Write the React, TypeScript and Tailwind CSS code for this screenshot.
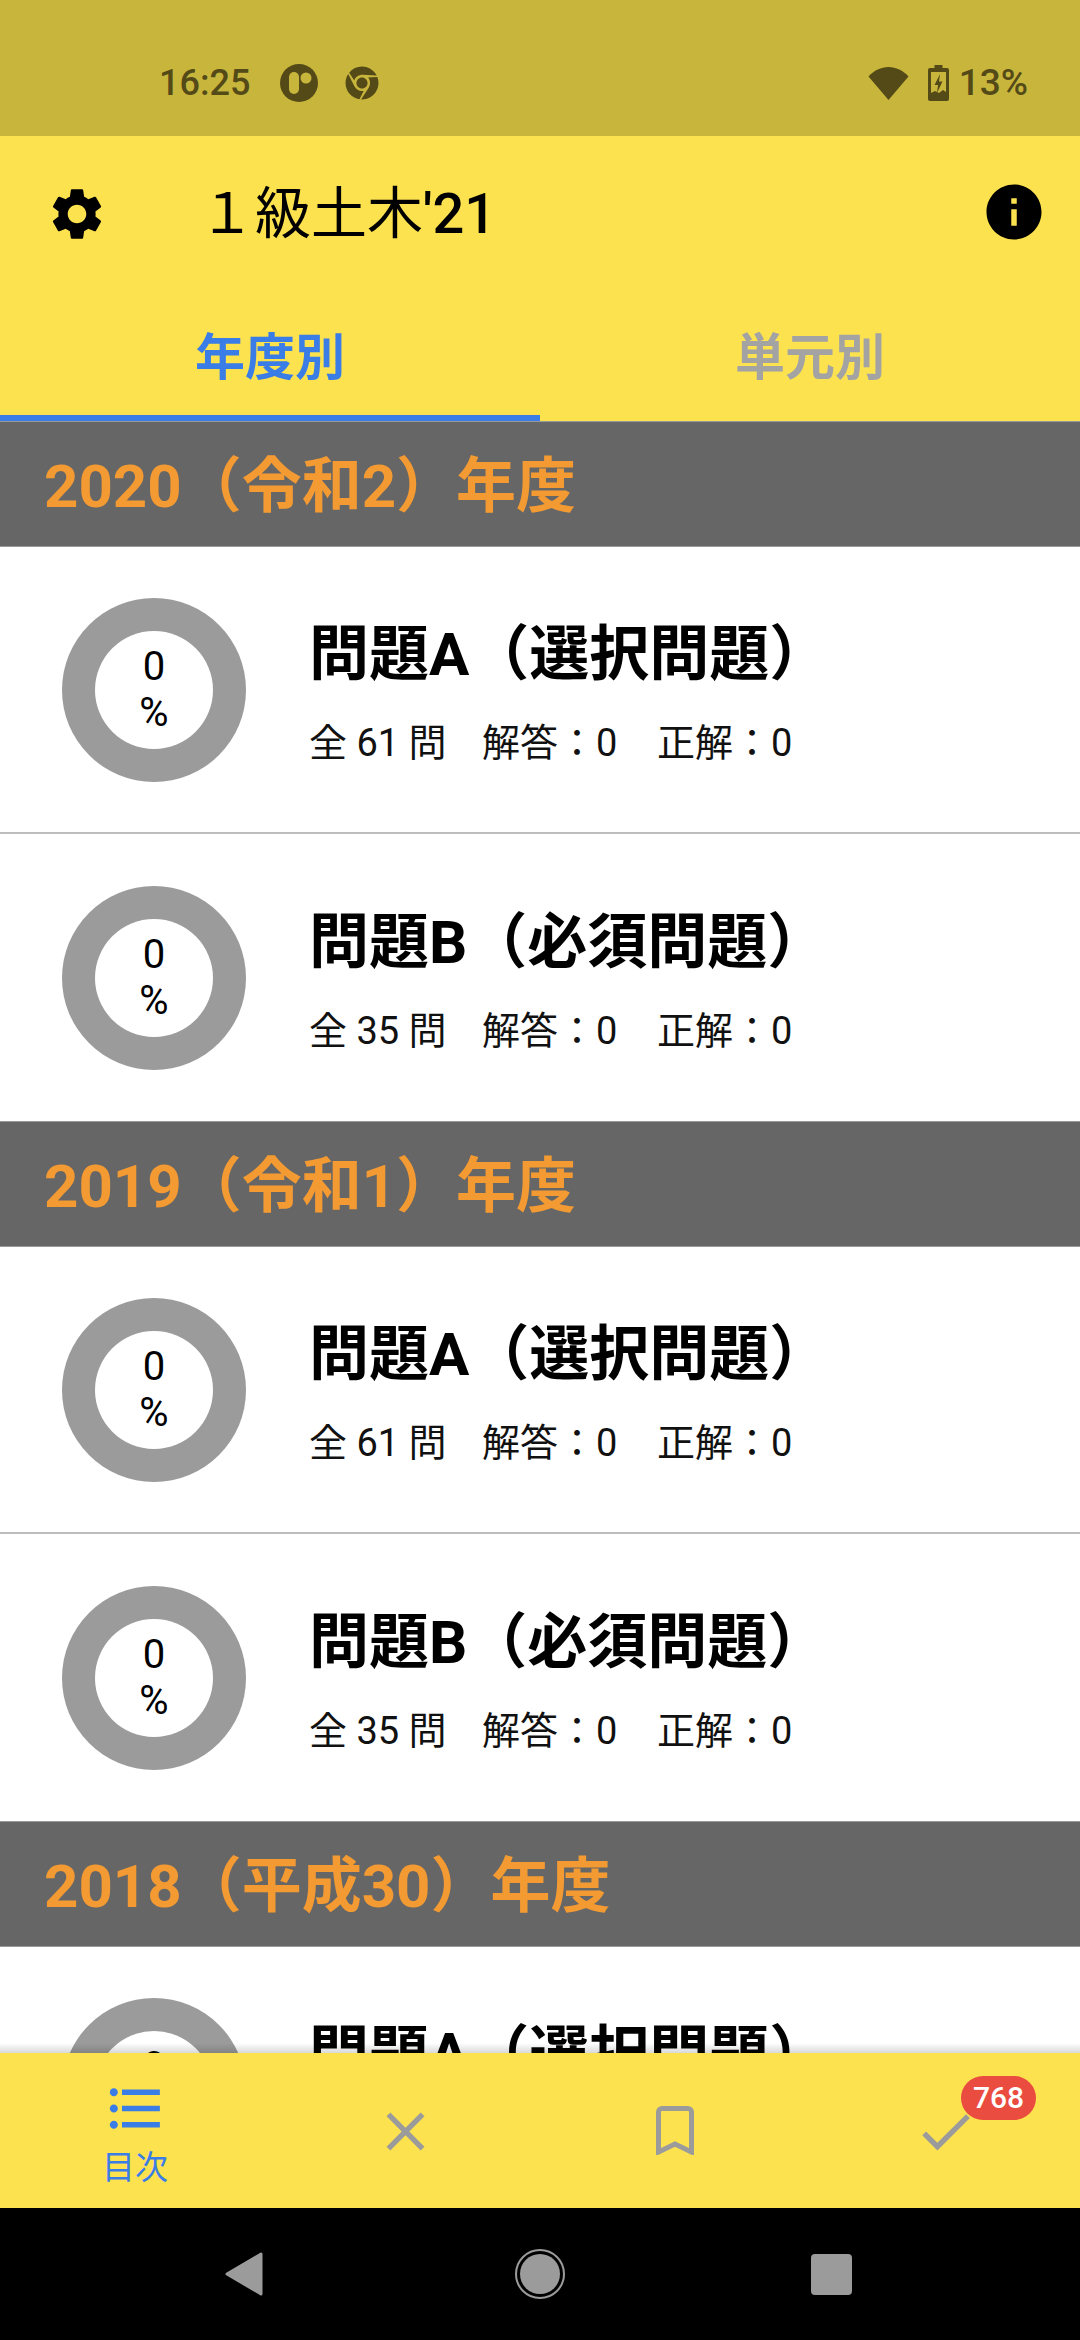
import { MdSettings, MdInfo, MdFormatListBulleted, MdClose, MdCheck } from 'react-icons/md'
import { FaChrome } from 'react-icons/fa'

const FONT = "font-['Roboto','Noto_Sans_CJK_JP',sans-serif]"

const sections = [
  { title: '2020（令和2）年度' },
  { title: '2019（令和1）年度' },
  { title: '2018（平成30）年度' },
]

const rows = [
  { name: '問題A（選択問題）', total: 61 },
  { name: '問題B（必須問題）', total: 35 },
]

function Donut() {
  return (
    <div className="w-[184px] h-[184px] rounded-full bg-[#9b9b9b] flex items-center justify-center shrink-0">
      <div className="w-[118px] h-[118px] rounded-full bg-white flex flex-col items-center justify-center text-[40px] leading-[46px] text-black">
        <span>0</span>
        <span>%</span>
      </div>
    </div>
  )
}

function Row({ name, total, divider }: { name: string; total: number; divider: boolean }) {
  return (
    <div className={`h-[287px] shrink-0 bg-white flex items-center pl-[62px] ${divider ? 'border-b-2 border-[#bdbdbd]' : ''}`}>
      <Donut />
      <div className="ml-[63px] pt-[10px] flex flex-col">
        <span className="text-[60px] leading-[72px] font-bold text-black whitespace-nowrap">{name}</span>
        <div className="mt-[24px] flex text-[38px] leading-[56px] text-[#111] whitespace-nowrap">
          <span className="w-[173px]">全 {total} 問</span>
          <span className="w-[175px]">解答：0</span>
          <span>正解：0</span>
        </div>
      </div>
    </div>
  )
}

function StatusBar() {
  return (
    <div className="h-[136px] shrink-0 bg-[#c8b63c] flex items-center justify-between pl-[159px] pr-[52px] pt-[30px] text-[#544a18]">
      <div className="flex items-center">
        <span className="text-[36px] font-medium">16:25</span>
        <svg className="ml-[30px]" width="38" height="38" viewBox="0 0 38 38">
          <circle cx="19" cy="19" r="19" fill="currentColor" />
          <rect x="9" y="8" width="10" height="22" rx="5" fill="#c8b63c" />
          <circle cx="26" cy="14" r="5.5" fill="#c8b63c" />
        </svg>
        <FaChrome className="ml-[27px]" size={34} />
      </div>
      <div className="flex items-center">
        <svg width="41" height="34" viewBox="0 0 41 34">
          <path d="M0.5 10.5C6 4.5 13 1 20.5 1S35 4.5 40.5 10.5L20.5 34z" fill="currentColor" />
        </svg>
        <svg className="ml-[19px]" width="21" height="36" viewBox="0 0 21 36">
          <path d="M6.5 0h8v3h4.5a2 2 0 0 1 2 2v29a2 2 0 0 1-2 2H2a2 2 0 0 1-2-2V5a2 2 0 0 1 2-2h4.500z" fill="currentColor" />
          <path d="M3 7h15v20l-3-2-4 3-4-2-4 2z" fill="#c8b63c" />
          <path d="M12 9 6.500 20h3.500L9 28l5.500-11.500h-3.500z" fill="currentColor" />
        </svg>
        <span className="ml-[10px] text-[37px] font-medium">13%</span>
      </div>
    </div>
  )
}

function Header() {
  return (
    <div className="shrink-0 bg-[#fde24f]">
      <div className="h-[164px] flex items-center relative pb-[9px]">
        <MdSettings className="ml-[46px] text-black" size={62} />
        <span className="ml-[91px] text-[56px] text-black">
          １級土木<span className="font-medium">'21</span>
        </span>
        <MdInfo className="absolute right-[33px] top-[43px] text-black" size={66} />
      </div>
      <div className="h-[121px] flex">
        <div className="w-1/2 border-b-[6px] border-[#3b7de6] flex items-center justify-center pt-[2px] text-[50px] font-bold text-[#3b7de6]">年度別</div>
        <div className="w-1/2 flex items-center justify-center pb-[4px] text-[50px] font-bold text-[#a3a3a3]">単元別</div>
      </div>
    </div>
  )
}

function BottomNav() {
  return (
    <div className="relative h-[155px] shrink-0 bg-[#fde24f] flex">
      <div className="absolute left-0 right-0 top-[-10px] h-[10px] bg-gradient-to-b from-transparent to-black/15" />
      <div className="flex-1 flex flex-col items-center pt-[23px] text-[#3b7de6]">
        <MdFormatListBulleted size={65} />
        <span className="text-[33px] leading-[44px] mt-[5px]">目次</span>
      </div>
      <div className="flex-1 flex justify-center pt-[46px] text-[#9b9b9b]">
        <MdClose size={65} />
      </div>
      <div className="flex-1 flex justify-center pt-[53px] text-[#9b9b9b]">
        <svg width="38" height="49" viewBox="0 0 38 49" fill="none" stroke="currentColor" strokeWidth="5">
          <path d="M2.500 46V6a3.500 3.500 0 0 1 3.500-3.500h26a3.500 3.500 0 0 1 3.500 3.500v40L19 38z" />
        </svg>
      </div>
      <div className="flex-1 flex justify-center pt-[46px] text-[#9b9b9b] relative">
        <MdCheck size={65} />
        <span className="absolute top-[23px] right-[44px] w-[75px] h-[44px] rounded-full bg-[#ea4c3f] text-white text-center text-[30px] leading-[44px] font-medium">768</span>
      </div>
    </div>
  )
}

function SystemNav() {
  return (
    <div className="h-[132px] shrink-0 bg-black flex items-center justify-center pr-[3px]">
      <svg width="38" height="44" viewBox="0 0 38 44">
        <path d="M36 2v40L2 22z" fill="#9b9b9b" stroke="#9b9b9b" strokeWidth="3" strokeLinejoin="round" />
      </svg>
      <div className="ml-[252px] w-[50px] h-[50px] rounded-full border-[2px] border-[#9b9b9b] flex items-center justify-center">
        <div className="w-[40px] h-[40px] rounded-full bg-[#9b9b9b]" />
      </div>
      <div className="ml-[246px] w-[41px] h-[41px] rounded-[4px] bg-[#9b9b9b]" />
    </div>
  )
}

export default function App() {
  return (
    <div className={`${FONT} w-[1080px] h-[2340px] flex flex-col overflow-hidden bg-white`}>
      <StatusBar />
      <Header />
      <div className="flex-1 min-h-0 overflow-hidden flex flex-col">
        {sections.map((s) => (
          <div key={s.title} className="shrink-0 flex flex-col">
            <div className="h-[126px] shrink-0 bg-[#666666] border-y border-[#999] flex items-center pl-[44px] pt-[5px] text-[60px] font-bold text-[#f39a33]">
              {s.title}
            </div>
            {rows.map((r, i) => (
              <Row key={r.name} name={r.name} total={r.total} divider={i === 0} />
            ))}
          </div>
        ))}
      </div>
      <BottomNav />
      <SystemNav />
    </div>
  )
}
